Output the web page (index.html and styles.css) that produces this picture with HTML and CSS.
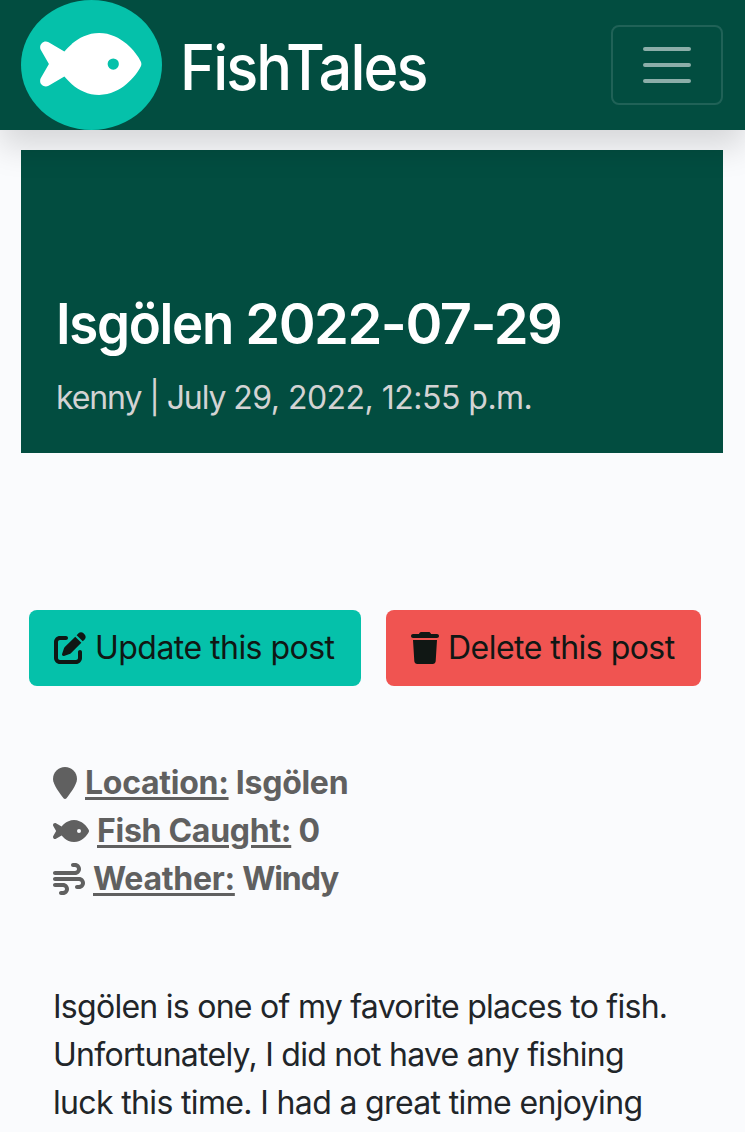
FILE: index.html
```html
<!DOCTYPE html>
<html lang="en">
<head>
<meta charset="utf-8">
<title>FishTales</title>
<link rel="stylesheet" href="styles.css">
</head>
<body>
<header class="navbar">
  <div class="brand">
    <span class="logo"><svg viewBox="0 0 576 512"><path d="M180.500 141.500C219.700 108.500 272.600 80 336 80s116.300 28.500 155.500 61.500c39.100 33 66.900 72.400 81 99.800c4.700 9.200 4.700 20.100 0 29.300c-14.100 27.400-41.900 66.800-81 99.800C452.300 403.500 399.400 432 336 432s-116.300-28.500-155.500-61.500c-16.200-13.700-30.500-28.500-42.700-43.100L48.100 379.600c-12.500 7.300-28.400 5.300-38.700-4.900S-3 348.700 4.200 336.100L50 256 4.200 175.900c-7.200-12.600-5-28.400 5.300-38.600s26.100-12.200 38.700-4.900l89.700 52.300c12.200-14.600 26.500-29.400 42.700-43.100zM448 256a32 32 0 1 0 -64 0 32 32 0 1 0 64 0z"/></svg></span>
    <span class="brand-name">FishTales</span>
  </div>
  <button class="toggler" aria-label="Menu"><svg viewBox="0 0 60 60"><path d="M8 14h44M8 30h44M8 46h44"/></svg></button>
</header>
<main class="page">
  <section class="hero">
    <h1 class="title"><span class="place">Isgölen</span> 2022-07-29</h1>
    <p class="byline"><span class="author">kenny | July </span>29, 2022, 12:55 p.m.</p>
  </section>
  <div class="actions">
    <button class="btn btn-update"><svg class="icon" viewBox="0 0 512 512"><path d="M471.600 21.700c-21.900-21.900-57.300-21.900-79.200 0L362.300 51.700l97.900 97.900 30.100-30.100c21.900-21.900 21.900-57.300 0-79.200L471.600 21.700zm-299.200 220c-6.100 6.100-10.800 13.600-13.500 21.900l-29.600 88.800c-2.900 8.600-.6 18.100 5.800 24.600s15.900 8.700 24.600 5.800l88.800-29.600c8.200-2.700 15.700-7.400 21.900-13.500L437.700 172.300 339.700 74.300 172.400 241.700zM96 64C43 64 0 107 0 160V416c0 53 43 96 96 96H352c53 0 96-43 96-96V320c0-17.700-14.300-32-32-32s-32 14.300-32 32v96c0 17.700-14.300 32-32 32H96c-17.700 0-32-14.300-32-32V160c0-17.700 14.300-32 32-32h96c17.700 0 32-14.300 32-32s-14.300-32-32-32H96z"/></svg><span>Update this post</span></button>
    <button class="btn btn-delete"><svg class="icon icon-trash" viewBox="0 0 448 512"><path d="M135.200 17.700L128 32H32C14.300 32 0 46.300 0 64S14.300 96 32 96H416c17.700 0 32-14.300 32-32s-14.300-32-32-32H320l-7.200-14.300C307.400 6.800 296.300 0 284.200 0H163.800c-12.100 0-23.200 6.800-28.600 17.700zM416 128H32L53.200 467c1.600 25.300 22.600 45 47.900 45H346.900c25.300 0 46.300-19.700 47.900-45L416 128z"/></svg><span>Delete this post</span></button>
  </div>
  <ul class="facts">
    <li class="fact"><svg class="icon icon-pin" viewBox="0 0 384 512"><path d="M384 192c0 87.400-117 243-168.300 307.200c-12.300 15.300-35.100 15.300-47.400 0C117 435 0 279.400 0 192C0 86 86 0 192 0S384 86 384 192z"/></svg><span><u>Location:</u> Isgölen</span></li>
    <li class="fact"><svg class="icon icon-fish" viewBox="0 0 576 512"><path d="M180.500 141.500C219.700 108.500 272.600 80 336 80s116.300 28.500 155.500 61.500c39.100 33 66.900 72.400 81 99.800c4.700 9.200 4.700 20.100 0 29.300c-14.100 27.400-41.900 66.800-81 99.800C452.300 403.500 399.400 432 336 432s-116.300-28.500-155.500-61.500c-16.200-13.700-30.500-28.500-42.700-43.100L48.100 379.600c-12.500 7.300-28.400 5.300-38.700-4.900S-3 348.700 4.200 336.100L50 256 4.200 175.900c-7.200-12.600-5-28.400 5.300-38.600s26.100-12.200 38.700-4.900l89.700 52.300c12.200-14.600 26.500-29.400 42.700-43.100zM448 256a32 32 0 1 0 -64 0 32 32 0 1 0 64 0z"/></svg><span><u>Fish Caught:</u> 0</span></li>
    <li class="fact"><svg class="icon" viewBox="0 0 512 512"><path d="M288 32c0 17.700 14.300 32 32 32h32c17.700 0 32 14.300 32 32s-14.300 32-32 32H32c-17.700 0-32 14.300-32 32s14.300 32 32 32H352c53 0 96-43 96-96s-43-96-96-96H320c-17.700 0-32 14.300-32 32zm64 352c0 17.700 14.300 32 32 32h32c53 0 96-43 96-96s-43-96-96-96H32c-17.700 0-32 14.300-32 32s14.300 32 32 32H416c17.700 0 32 14.300 32 32s-14.300 32-32 32H384c-17.700 0-32 14.300-32 32zM128 512h32c53 0 96-43 96-96s-43-96-96-96H32c-17.700 0-32 14.300-32 32s14.300 32 32 32H160c17.700 0 32 14.300 32 32s-14.300 32-32 32H128c-17.700 0-32 14.300-32 32s14.300 32 32 32z"/></svg><span><u>Weather:</u> <span class="wind">Windy</span></span></li>
  </ul>
  <p class="story">Isgölen is one of my favorite places to fish.<br>Unfortunately, I did not have any fishing<br><span class="last">luck this time. I had a great time enjoying</span></p>
</main>
</body>
</html>
```
FILE: styles.css
```css
* { box-sizing: border-box; }
body {
  margin: 0;
  height: 1132px;
  overflow: hidden;
  background: #fafbfd;
  color: #212529;
  font: 32px/48px Inter, "Liberation Sans", sans-serif;
}
.navbar {
  position: relative;
  z-index: 1;
  display: flex;
  align-items: center;
  justify-content: space-between;
  height: 130px;
  padding: 0 22px 0 21px;
  background: #024d40;
  box-shadow: 0 16px 32px rgba(0, 0, 0, .15);
}
.brand { display: flex; align-items: center; }
.logo {
  display: flex;
  align-items: center;
  width: 141px;
  height: 130px;
  padding: 0 0 2px 19px;
  border-radius: 50%;
  background: #05c1aa;
}
.logo svg { width: 101.500px; height: 90px; fill: #fff; }
.brand-name {
  margin: 3px 0 0 18px;
  color: #fff;
  font-size: 63px;
  font-weight: 500;
  line-height: 96px;
  letter-spacing: -2px;
  transform: scaleX(.943);
  transform-origin: left;
}
.toggler {
  display: flex;
  align-items: center;
  justify-content: center;
  width: 112px;
  height: 80px;
  padding: 0;
  border: 2px solid rgba(255, 255, 255, .12);
  border-radius: 8px;
  background: none;
}
.toggler svg {
  width: 60px;
  height: 60px;
  fill: none;
  stroke: rgba(255, 255, 255, .55);
  stroke-width: 4;
  stroke-linecap: round;
}
.page { padding: 20px 22px 0 21px; }
.hero {
  height: 303px;
  padding: 141px 35px 0;
  background: #024d40;
}
.title {
  margin: 0;
  color: #fff;
  font-size: 56px;
  font-weight: 600;
  line-height: 67px;
  letter-spacing: -1.5px;
  white-space: nowrap;
}
.place {
  display: inline-block;
  margin-right: -11px;
  letter-spacing: -1.4px;
  transform: scaleX(.943);
  transform-origin: left;
}
.byline {
  margin: 16px 0 0;
  color: #d3d3d3;
  letter-spacing: -.52px;
  white-space: nowrap;
}
.author { letter-spacing: -1.1px; }
.actions { display: flex; gap: 25px; padding: 157px 0 0 8px; }
.btn {
  display: flex;
  align-items: center;
  gap: 9px;
  height: 76px;
  padding: 0 25px;
  border: 0;
  border-radius: 8px;
  color: #101714;
  font: inherit;
  letter-spacing: -.53px;
  white-space: nowrap;
}
.btn-update { width: 332px; background: #05c1aa; }
.btn-delete { width: 315px; background: #f05451; }
.icon { flex: none; width: 32px; height: 32px; fill: currentColor; }
.icon-trash { width: 28px; }
.icon-pin { width: 24px; }
.icon-fish { width: 36px; }
.facts {
  margin: 73px 0 0;
  padding: 0 32px;
  list-style: none;
  color: #606060;
  font-weight: 700;
  letter-spacing: -.28px;
}
.fact { display: flex; align-items: center; gap: 8px; height: 48px; white-space: nowrap; }
.fact u { text-decoration-thickness: 3px; text-underline-offset: 3px; }
.wind { letter-spacing: -1.1px; }
.story {
  margin: 80px 0 0;
  padding: 0 32px;
  letter-spacing: -.73px;
  white-space: nowrap;
}
.last { letter-spacing: -.65px; }
```
